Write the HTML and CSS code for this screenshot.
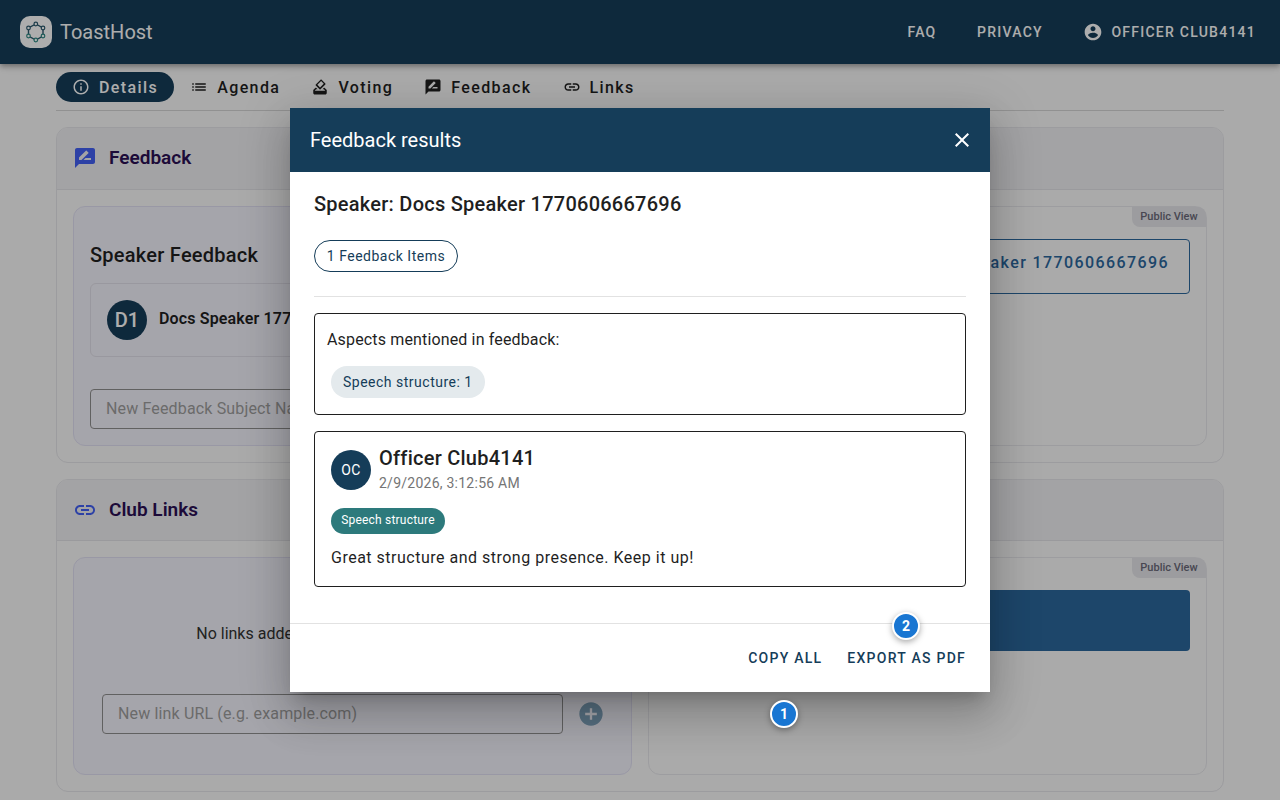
FILE: index.html
```html
<!DOCTYPE html>
<html lang="en">
<head>
<meta charset="utf-8">
<title>ToastHost</title>
<link rel="stylesheet" href="styles.css">
</head>
<body>
<div class="page">
  <header class="appbar">
    <div class="brand">
      <span class="logo">
        <svg viewBox="0 0 32 32" width="32" height="32">
          <path d="M15.800 8 23 12V20L15.800 24 8.500 20V12Z" fill="none" stroke="#2c5a6e" stroke-width="1.400"/>
          <circle cx="15.800" cy="8" r="1.800" fill="#fff" stroke="#2c5a6e" stroke-width="1.200"/>
          <circle cx="23" cy="12" r="1.800" fill="#fff" stroke="#2c5a6e" stroke-width="1.200"/>
          <circle cx="23" cy="20" r="1.800" fill="#fff" stroke="#2f8a84" stroke-width="1.200"/>
          <circle cx="15.800" cy="24" r="1.800" fill="#fff" stroke="#2f8a84" stroke-width="1.200"/>
          <circle cx="8.500" cy="20" r="1.800" fill="#fff" stroke="#2f8a84" stroke-width="1.200"/>
          <circle cx="8.500" cy="12" r="1.800" fill="#fff" stroke="#2c5a6e" stroke-width="1.200"/>
        </svg>
      </span>
      <span class="brand-name">ToastHost</span>
    </div>
    <nav class="topnav">
      <a class="topnav-link">FAQ</a>
      <a class="topnav-link">PRIVACY</a>
      <a class="topnav-link topnav-user">
        <svg viewBox="0 0 24 24" width="20" height="20"><path fill="currentColor" d="M12 2C6.480 2 2 6.480 2 12s4.480 10 10 10 10-4.480 10-10S17.520 2 12 2zm0 3c1.660 0 3 1.340 3 3s-1.340 3-3 3-3-1.340-3-3 1.340-3 3-3zm0 14.200c-2.500 0-4.710-1.280-6-3.220.03-1.990 4-3.080 6-3.080 1.990 0 5.970 1.090 6 3.080-1.290 1.940-3.500 3.220-6 3.220z"/></svg>
        <span>OFFICER CLUB4141</span>
      </a>
    </nav>
  </header>

  <main class="content">
    <div class="tabs">
      <a class="tab tab-active">
        <svg viewBox="0 0 24 24" width="18" height="18"><path fill="currentColor" d="M11 7h2v2h-2zm0 4h2v6h-2zm1-9C6.480 2 2 6.480 2 12s4.480 10 10 10 10-4.480 10-10S17.520 2 12 2zm0 18c-4.410 0-8-3.590-8-8s3.590-8 8-8 8 3.590 8 8-3.590 8-8 8z"/></svg>
        <span>Details</span>
      </a>
      <a class="tab">
        <svg viewBox="0 0 24 24" width="18" height="18"><path fill="currentColor" d="M3 13h2v-2H3v2zm0 4h2v-2H3v2zm0-8h2V7H3v2zm4 4h14v-2H7v2zm0 4h14v-2H7v2zM7 7v2h14V7H7z"/></svg>
        <span>Agenda</span>
      </a>
      <a class="tab">
        <svg viewBox="0 0 24 24" width="18" height="18"><path fill="currentColor" d="M18 13h-.680l-2 2h1.910L19 17H5l1.780-2h2.050l-2-2H6l-3 3v4c0 1.100.890 2 1.990 2H19c1.100 0 2-.890 2-2v-4l-3-3zM11.340 15.020c.390.390 1.020.390 1.410 0l6.360-6.360c.390-.390.390-1.020 0-1.410L14.160 2.300c-.380-.400-1.010-.400-1.400-.010L6.390 8.660c-.390.390-.390 1.020 0 1.410l4.950 4.950zm2.120-10.900 3.530 3.540-4.950 4.950L8.500 9.070l4.960-4.950z"/></svg>
        <span>Voting</span>
      </a>
      <a class="tab">
        <svg viewBox="0 0 24 24" width="18" height="18"><path fill="currentColor" d="M20 2H4c-1.100 0-2 .900-2 2v18l4-4h14c1.100 0 2-.900 2-2V4c0-1.100-.900-2-2-2zM6 14v-2.470l6.880-6.880c.200-.200.510-.200.710 0l1.770 1.770c.200.200.200.510 0 .710L8.470 14H6zm12 0h-7.500l2-2H18v2z"/></svg>
        <span>Feedback</span>
      </a>
      <a class="tab">
        <svg viewBox="0 0 24 24" width="18" height="18"><path fill="currentColor" d="M3.900 12c0-1.710 1.390-3.100 3.100-3.100h4V7H7c-2.760 0-5 2.240-5 5s2.240 5 5 5h4v-1.900H7c-1.710 0-3.100-1.390-3.100-3.100zM8 13h8v-2H8v2zm9-6h-4v1.900h4c1.710 0 3.100 1.390 3.100 3.100s-1.390 3.100-3.100 3.100h-4V17h4c2.760 0 5-2.240 5-5s-2.240-5-5-5z"/></svg>
        <span>Links</span>
      </a>
    </div>

    <section class="section section-feedback">
      <div class="section-head">
        <svg viewBox="0 0 24 24" width="24" height="24"><path fill="#4361f5" d="M20 2H4c-1.100 0-2 .900-2 2v18l4-4h14c1.100 0 2-.900 2-2V4c0-1.100-.900-2-2-2zM6 14v-2.470l6.880-6.880c.200-.200.510-.200.710 0l1.770 1.770c.200.200.200.510 0 .710L8.470 14H6zm12 0h-7.500l2-2H18v2z"/></svg>
        <h2 class="section-title">Feedback</h2>
      </div>
      <div class="section-body">
        <div class="panel panel-admin">
          <h3 class="panel-title">Speaker Feedback</h3>
          <div class="speaker-card">
            <span class="avatar avatar-speaker">D1</span>
            <strong class="speaker-name">Docs Speaker 1770606667696</strong>
          </div>
          <div class="field">New Feedback Subject Name</div>
        </div>
        <div class="panel panel-public">
          <span class="public-tag">Public View</span>
          <div class="speaker-outline">Docs Speaker 1770606667696</div>
        </div>
      </div>
    </section>

    <section class="section section-links">
      <div class="section-head section-head-short">
        <svg viewBox="0 0 24 24" width="24" height="24"><path fill="#4361f5" d="M3.900 12c0-1.710 1.390-3.100 3.100-3.100h4V7H7c-2.760 0-5 2.240-5 5s2.240 5 5 5h4v-1.900H7c-1.710 0-3.100-1.390-3.100-3.100zM8 13h8v-2H8v2zm9-6h-4v1.900h4c1.710 0 3.100 1.390 3.100 3.100s-1.390 3.100-3.100 3.100h-4V17h4c2.760 0 5-2.240 5-5s-2.240-5-5-5z"/></svg>
        <h2 class="section-title">Club Links</h2>
      </div>
      <div class="section-body">
        <div class="panel panel-links">
          <p class="empty-note">No links added yet. Add your first link below.</p>
          <div class="link-form">
            <div class="field field-grow">New link URL (e.g. example.com)</div>
            <svg class="add-icon" viewBox="0 0 24 24" width="28" height="28"><path fill="#7fa3bb" d="M12 2C6.480 2 2 6.480 2 12s4.480 10 10 10 10-4.480 10-10S17.520 2 12 2zm5 11h-4v4h-2v-4H7v-2h4V7h2v4h4v2z"/></svg>
          </div>
        </div>
        <div class="panel panel-public">
          <span class="public-tag">Public View</span>
          <div class="blue-block"></div>
        </div>
      </div>
    </section>
  </main>

  <div class="overlay"></div>

  <div class="dialog">
    <div class="dialog-head">
      <span class="dialog-title">Feedback results</span>
      <svg viewBox="0 0 24 24" width="24" height="24"><path fill="#fff" d="M19 6.410 17.590 5 12 10.590 6.410 5 5 6.410 10.590 12 5 17.590 6.410 19 12 13.410 17.590 19 19 17.590 13.410 12z"/></svg>
    </div>
    <div class="dialog-body">
      <h3 class="speaker-heading">Speaker: Docs Speaker 1770606667696</h3>
      <span class="count-chip">1 Feedback Items</span>
      <div class="divider"></div>
      <div class="box box-aspects">
        <p class="aspects-label">Aspects mentioned in feedback:</p>
        <span class="aspect-chip">Speech structure: 1</span>
      </div>
      <div class="box box-item">
        <div class="item-head">
          <span class="avatar avatar-officer">OC</span>
          <div class="item-meta">
            <div class="item-name">Officer Club4141</div>
            <div class="item-date">2/9/2026, 3:12:56 AM</div>
          </div>
        </div>
        <span class="item-tag">Speech structure</span>
        <p class="item-text">Great structure and strong presence. Keep it up!</p>
      </div>
    </div>
    <div class="dialog-foot">
      <span class="dialog-action">COPY ALL</span>
      <span class="dialog-action">EXPORT AS PDF</span>
    </div>
  </div>

  <span class="marker marker-one">1</span>
  <span class="marker marker-two">2</span>
</div>
</body>
</html>
```

FILE: styles.css
```css
* { box-sizing: border-box; }
html, body { margin: 0; padding: 0; height: 100%; overflow: hidden; }
body { font-family: Roboto, "Liberation Sans", sans-serif; background: #fbfbfb; color: #1f1f1f; }
.page { position: relative; width: 1280px; height: 800px; overflow: hidden; background: #fbfbfb; }

.appbar { height: 64px; background: #153d59; color: #fff; display: flex; align-items: center; justify-content: space-between; padding: 0 24px 0 20px; box-shadow: 0 2px 4px -1px rgba(0,0,0,.2), 0 4px 5px rgba(0,0,0,.14), 0 1px 10px rgba(0,0,0,.12); position: relative; }
.brand { display: flex; align-items: center; gap: 8px; }
.logo { width: 32px; height: 32px; border-radius: 10px; background: #fff; display: block; }
.logo svg { display: block; }
.brand-name { font-size: 20px; color: #fff; }
.topnav { display: flex; align-items: center; gap: 40.500px; }
.topnav-link { font-size: 14px; font-weight: 500; letter-spacing: 1.250px; color: #fff; display: flex; align-items: center; gap: 8px; }
.topnav-user svg { display: block; }

.content { padding: 8px 56px 0; }
.tabs { display: flex; align-items: center; gap: 16px; height: 39px; padding-bottom: 9px; border-bottom: 1px solid #d6d6d6; }
.tab { height: 30px; display: flex; align-items: center; gap: 9px; font-size: 16px; font-weight: 500; letter-spacing: 1.400px; color: #1f1f1f; margin-right: 15px; }
.tab svg { display: block; flex: none; }
.tab span { padding-top: 2px; }
.tab-active { background: #153d59; color: #fff; border-radius: 15px; padding: 0 16px; margin-right: 0; }

.section { border: 1px solid #e6e6ea; border-radius: 12px; margin-top: 16px; }
.section-head { height: 62px; display: flex; align-items: center; gap: 12px; padding: 0 16px 2px; background: #f1f1f4; border-bottom: 1px solid #e4e4e8; border-radius: 11px 11px 0 0; }
.section-head-short { height: 61px; padding-bottom: 1px; }
.section-title { margin: 0; font-size: 19px; font-weight: 600; color: #2b1055; }
.section-body { display: grid; grid-template-columns: 559px 559px; gap: 16px; padding: 16px; }

.panel { position: relative; border-radius: 12px; }
.panel-admin, .panel-links { background: #f4f3fc; border: 1px solid #e2e1f4; padding: 0 16px; }
.panel-admin { height: 240px; padding-top: 34px; }
.panel-links { height: 218px; display: flex; flex-direction: column; }
.panel-public { border: 1px solid #e8e8ec; padding: 32px 16px 16px; }
.panel-title { margin: 0 0 14px; font-size: 20px; line-height: 28px; font-weight: 500; letter-spacing: .25px; color: #1f1f1f; }
.speaker-card { height: 74px; border: 1px solid #e2e1ea; border-radius: 6px; padding: 16px; display: flex; align-items: center; gap: 12px; white-space: nowrap; overflow: hidden; }
.speaker-name { font-size: 16px; font-weight: 600; letter-spacing: .15px; padding-bottom: 3px; }
.avatar { display: flex; align-items: center; justify-content: center; width: 40px; height: 40px; border-radius: 50%; background: #153d59; color: #fff; flex: none; }
.avatar-speaker { font-size: 20px; font-weight: 500; }
.avatar-officer { font-size: 14px; letter-spacing: .3px; }
.field { height: 40px; margin-top: 32px; border: 1px solid #8f8f8f; border-radius: 4px; padding: 0 15px; font-size: 16px; line-height: 38px; letter-spacing: .15px; color: #9e9e9e; }
.empty-note { margin: 66px 0 0; font-size: 16px; line-height: 20px; text-align: center; color: #333; }
.link-form { display: flex; align-items: center; gap: 14px; margin: 50px 12px 0; }
.field-grow { margin-top: 0; flex: none; width: 461px; }
.add-icon { display: block; flex: none; }
.public-tag { position: absolute; top: 0; right: 0; width: 74px; height: 20px; border-radius: 0 8px 0 8px; background: #e6e6ea; color: #6a6979; font-size: 11px; font-weight: 500; line-height: 20px; text-align: center; }
.speaker-outline { height: 55px; border: 1px solid #2c679d; border-radius: 4px; color: #2c679d; font-size: 16px; font-weight: 500; letter-spacing: 1.400px; line-height: 46px; text-align: right; padding-right: 20px; white-space: nowrap; }
.blue-block { height: 61px; background: #2c679d; border-radius: 4px; }

.overlay { position: absolute; inset: 0; background: rgba(0,0,0,.32); }

.dialog { position: absolute; left: 290px; top: 108px; width: 700px; height: 584px; background: #fff; display: flex; flex-direction: column; box-shadow: 0 11px 15px -7px rgba(0,0,0,.2), 0 24px 38px 3px rgba(0,0,0,.14), 0 9px 46px 8px rgba(0,0,0,.12); }
.dialog-head { height: 64px; flex: none; background: #153d59; display: flex; align-items: center; justify-content: space-between; padding: 0 16px 0 20px; }
.dialog-title { font-size: 20px; color: #fff; }
.dialog-body { flex: 1; padding: 18px 24px 0; display: flex; flex-direction: column; align-items: flex-start; }
.speaker-heading { margin: 0; font-size: 20px; line-height: 28px; font-weight: 500; letter-spacing: .25px; color: #1f1f1f; }
.count-chip { margin-top: 22px; height: 32px; width: 144px; border: 1px solid #153d59; border-radius: 16px; font-size: 14px; line-height: 30px; text-align: center; letter-spacing: .5px; color: #153d59; }
.divider { align-self: stretch; height: 1px; background: #e2e2e2; margin-top: 24px; }
.box { align-self: stretch; border: 1px solid #1f1f1f; border-radius: 4px; }
.box-aspects { margin-top: 16px; height: 102px; padding: 12px; }
.aspects-label { margin: 0; font-size: 16px; line-height: 28px; letter-spacing: .15px; }
.aspect-chip { display: inline-block; margin: 12px 0 0 4px; height: 32px; padding: 0 12px; border-radius: 16px; background: #e4eaed; color: #153d59; font-size: 14px; line-height: 32px; letter-spacing: .5px; }
.box-item { margin-top: 16px; height: 156px; padding: 18px 16px 0; }
.item-head { display: flex; gap: 8px; height: 40px; }
.item-meta { margin-top: -6px; }
.item-name { font-size: 20px; line-height: 28px; font-weight: 500; letter-spacing: .25px; }
.item-date { font-size: 14px; line-height: 22px; letter-spacing: .25px; color: #757575; }
.item-tag { display: block; width: 114px; margin-top: 18px; height: 26px; border-radius: 13px; background: #2d7a7c; color: #fff; font-size: 12px; line-height: 24px; text-align: center; letter-spacing: .2px; }
.item-text { margin: 12px 0 0; font-size: 16px; line-height: 24px; letter-spacing: .5px; }
.dialog-foot { height: 69px; flex: none; border-top: 1px solid #e2e2e2; display: flex; align-items: center; justify-content: flex-end; gap: 25px; padding: 0 24px; }
.dialog-action { font-size: 14px; font-weight: 500; letter-spacing: 1.250px; color: #153d59; }

.marker { position: absolute; width: 28px; height: 28px; border-radius: 50%; border: 2px solid #fff; background: #1976d2; color: #fff; font-size: 14px; font-weight: 700; line-height: 24px; text-align: center; box-shadow: 0 2px 6px rgba(0,0,0,.35); }
.marker-one { left: 770px; top: 700px; }
.marker-two { left: 892px; top: 612px; }
```
